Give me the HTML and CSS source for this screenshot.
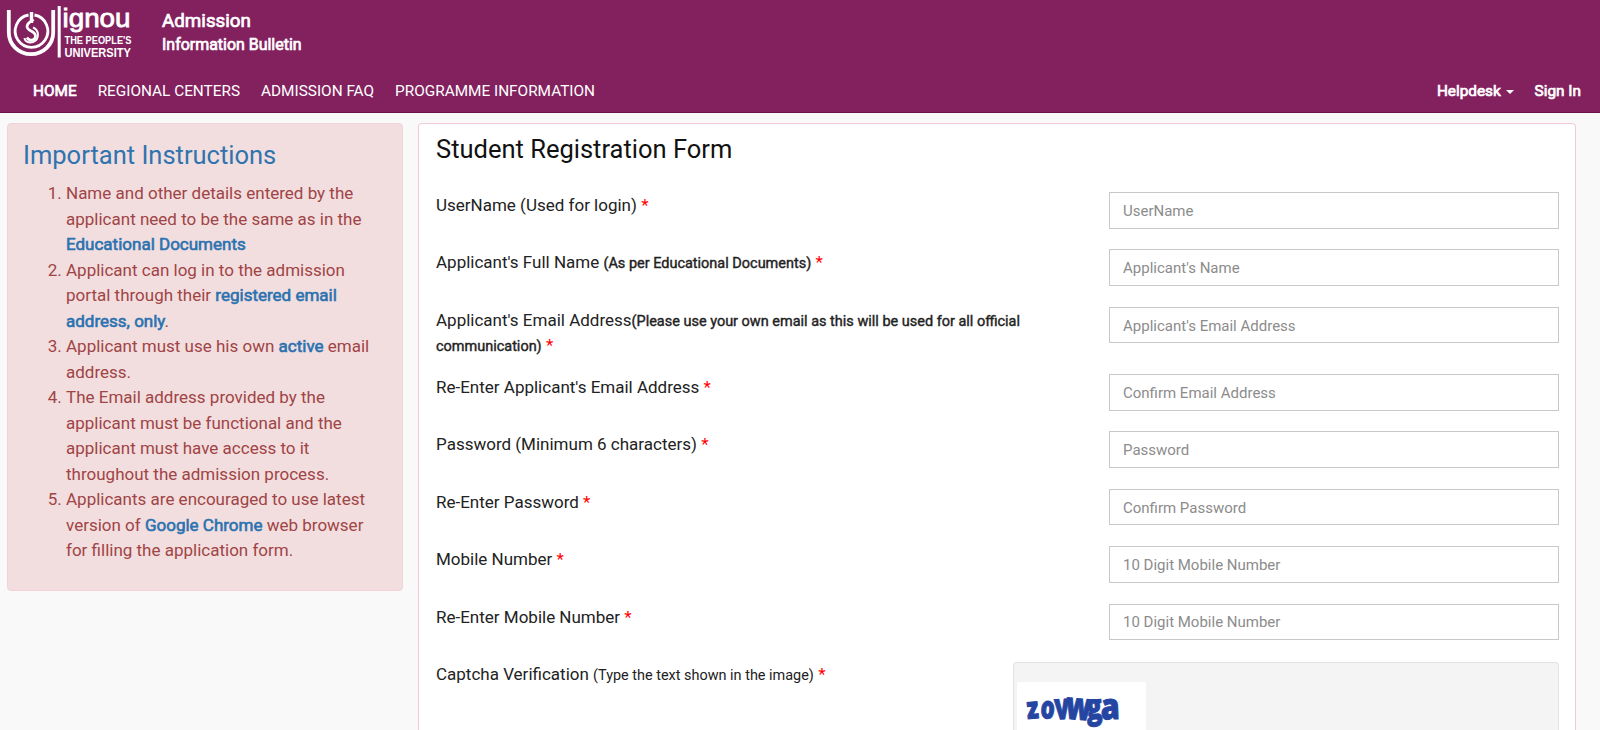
FILE: index.html
```
<!DOCTYPE html>
<html lang="en">
<head>
<meta charset="utf-8">
<title>Student Registration</title>
<link rel="stylesheet" href="styles.css">
</head>
<body>
<header class="header">
  <div class="brand">
    <svg class="logo" width="136" height="62" viewBox="0 0 136 62" fill="none" stroke="#fff">
      <path d="M8.800 10v22.500a22 21.500 0 0 0 44.400 0V10" stroke-width="3.800"/>
      <path d="M28.500 15a16.300 16.300 0 1 0 6 0" stroke-width="2.800"/>
      <path d="M31.500 12v11" stroke-width="3.400"/>
      <path d="M33.500 19.500c-2 2-6.500 3-6.500 7 0 5 8.500 4 8.500 9.500 0 4-6 6-8.500 1.500" stroke-width="2.600"/>
      <path d="M33 27.500c6 2 7 12 0 14.500-4 1-8 0-8.500-4" stroke-width="2"/>
      <path d="M59.200 6v51.500" stroke-width="3"/>
      <g class="logo-text" fill="#fff">
        <text x="62.500" y="27" font-size="25.500" textLength="68" lengthAdjust="spacingAndGlyphs" stroke-width=".8">ignou</text>
        <text x="64.500" y="44" font-size="11" font-weight="700" textLength="67" lengthAdjust="spacingAndGlyphs" stroke="none">THE PEOPLE'S</text>
        <text x="64.500" y="56.500" font-size="12" font-weight="700" textLength="66.500" lengthAdjust="spacingAndGlyphs" stroke="none">UNIVERSITY</text>
      </g>
    </svg>
    <div class="site-name"><div class="site-title">Admission</div><div class="site-sub">Information Bulletin</div></div>
  </div>
  <nav class="nav">
    <a class="strong">HOME</a><a>REGIONAL CENTERS</a><a>ADMISSION FAQ</a><a>PROGRAMME INFORMATION</a>
    <a class="strong right">Helpdesk <i class="caret"></i></a><a class="strong">Sign In</a>
  </nav>
</header>
<main class="main">
  <aside class="instructions">
    <h2>Important Instructions</h2>
    <ol>
      <li>Name and other details entered by the<br>applicant need to be the same as in the<br><b>Educational Documents</b></li>
      <li>Applicant can log in to the admission<br>portal through their <b>registered email<br>address, only</b>.</li>
      <li>Applicant must use his own <b>active</b> email<br>address.</li>
      <li>The Email address provided by the<br>applicant must be functional and the<br>applicant must have access to it<br>throughout the admission process.</li>
      <li>Applicants are encouraged to use latest<br>version of <b>Google Chrome</b> web browser<br>for filling the application form.</li>
    </ol>
  </aside>
  <form class="form">
    <h1>Student Registration Form</h1>
    <div class="row"><label>UserName (Used for login) <em>*</em></label><input placeholder="UserName"></div>
    <div class="row"><label>Applicant's Full Name <b>(As per Educational Documents)</b> <em>*</em></label><input placeholder="Applicant's Name"></div>
    <div class="row tall"><label>Applicant's Email Address<b>(Please use your own email as this will be used for all official<br>communication)</b> <em>*</em></label><input placeholder="Applicant's Email Address"></div>
    <div class="row"><label>Re-Enter Applicant's Email Address <em>*</em></label><input placeholder="Confirm Email Address"></div>
    <div class="row"><label>Password (Minimum 6 characters) <em>*</em></label><input placeholder="Password"></div>
    <div class="row"><label>Re-Enter Password <em>*</em></label><input placeholder="Confirm Password"></div>
    <div class="row"><label>Mobile Number <em>*</em></label><input placeholder="10 Digit Mobile Number"></div>
    <div class="row"><label>Re-Enter Mobile Number <em>*</em></label><input placeholder="10 Digit Mobile Number"></div>
    <div class="row captcha-row"><label>Captcha Verification <small>(Type the text shown in the image)</small> <em>*</em></label>
      <div class="captcha"><div class="captcha-image">
        <svg width="129" height="48" viewBox="0 0 129 48" class="captcha-text">
          <text transform="translate(10.500 37) rotate(-5) scale(.78 1)" font-size="30">z</text>
          <text transform="translate(23 36) rotate(4) scale(.72 1)" font-size="31">o</text>
          <text transform="translate(38 37.500) rotate(-3) scale(.68 1)" font-size="36">v</text>
          <text transform="translate(48 36.500) rotate(5) scale(.74 1)" font-size="38">w</text>
          <text transform="translate(70 37) rotate(-4) scale(.76 1)" font-size="34">g</text>
          <text transform="translate(84 37.500) rotate(-2) scale(.85 1)" font-size="36">a</text>
        </svg>
      </div></div>
    </div>
  </form>
</main>
</body>
</html>
```
FILE: styles.css
```
* { box-sizing: border-box; }
body { margin: 0; height: 730px; display: flex; flex-direction: column; overflow: hidden; background: #f9f9f9; font-family: Roboto, "Liberation Sans", sans-serif; font-size: 17px; color: #222; }
.header { flex: none; height: 113px; background: #83215f; border-bottom: 1px solid #6b104a; color: #fff; }
.brand { display: flex; height: 62px; }
.logo { flex: none; }
.logo-text { font-family: "Liberation Sans", sans-serif; }
.site-name { padding: 10px 0 0 26px; -webkit-text-stroke: .7px; line-height: 23px; }
.site-title { font-size: 18.8px; }
.site-sub { font-size: 15.95px; }
.nav { display: flex; gap: 21px; padding: 18px 19px 0 33px; font-size: 15.35px; line-height: 22px; }
.strong { -webkit-text-stroke: .7px; }
.right { margin-left: auto; }
.caret { display: inline-block; border: 4.5px solid transparent; border-top-color: #fff; border-bottom: 0; vertical-align: middle; margin-left: 1px; }
.main { flex: 1; min-height: 0; display: flex; align-items: flex-start; gap: 15px; padding: 10px 24px 0 7px; }
.instructions { flex: none; width: 396px; height: 468px; background: #f2dede; border: 1px solid #efd3d8; border-radius: 4px; padding: 12px 16px 12px 15px; color: #a04446; }
.instructions h2 { margin: 0; font-size: 25.5px; line-height: 38px; font-weight: 400; color: #2f74ae; }
.instructions ol { margin: 7px 0 0; padding-left: 43px; line-height: 25.5px; font-size: 17px; }
.instructions b { font-weight: 400; color: #2a72b0; -webkit-text-stroke: .6px; }
.form { flex: 1; height: 100%; overflow: hidden; background: #fff; border: 1px solid #f3ccd3; border-bottom: 0; border-radius: 4px 4px 0 0; padding: 6px 16px 0 17px; }
.form h1 { margin: 0 0 24px; font-size: 25.5px; line-height: 38px; font-weight: 400; color: #111; }
.row { display: flex; justify-content: space-between; height: 57.4px; }
.tall { height: 67.3px; }
.row label { line-height: 26px; font-size: 17px; }
.row b { font-weight: 400; font-size: 14.47px; line-height: 20px; -webkit-text-stroke: .4px; }
.row.tall label { line-height: 25px; padding-top: 1px; }
.row small { font-size: 14.45px; }
.row em { color: #f00; font-style: normal; }
.row input { width: 450px; height: 36.5px; border: 1px solid #c9c9c9; border-radius: 0; padding: 1px 13px 0; font: 15px Roboto, sans-serif; outline: 0; background: #fff; }
.row input::placeholder { color: #8c8c8c; opacity: 1; }
.captcha-row { height: 69px; }
.captcha { width: 546px; height: 68px; flex: none; margin-top: 1px; background: #f4f4f4; border: 1px solid #e3e3e3; border-bottom: 0; border-radius: 4px 4px 0 0; padding: 19px 3px 0; }
.captcha-image { width: 129px; height: 48px; background: #fff; }
.captcha-text { display: block; fill: #2545a2; stroke: #2545a2; stroke-width: 1px; font-family: "Open Sans", sans-serif; font-weight: 800; }
```
